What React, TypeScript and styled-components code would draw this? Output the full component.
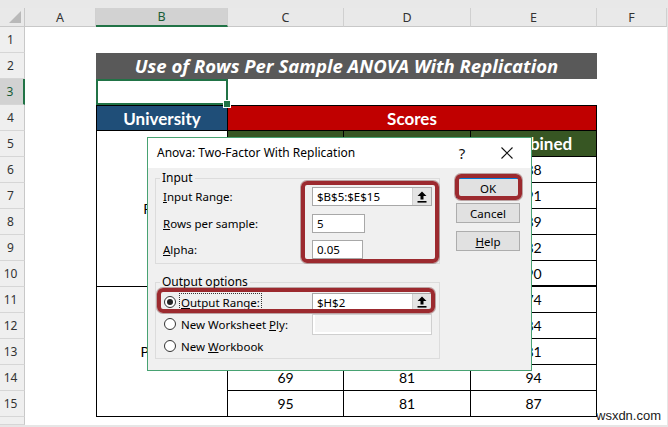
import styled, { createGlobalStyle, css } from 'styled-components';

const GlobalStyle = createGlobalStyle`
  html, body {
    margin: 0;
    padding: 0;
  }
  body {
    width: 668px;
    height: 427px;
    overflow: hidden;
    background: #e6e6e6;
    font-family: "Noto Sans", "Open Sans", sans-serif;
  }
`;

const Screen = styled.div`
  position: relative;
  width: 668px;
  height: 427px;
  display: flex;
  flex-direction: column;
  background: #e6e6e6;
  overflow: hidden;
`;

const TopStrip = styled.div`
  height: 8px;
  flex: none;
  background: #e8e8e8;
`;

const Sheet = styled.div`
  display: grid;
  grid-template-columns: 25px 71px 132px 116px 127px 126px 70px;
  grid-template-rows: 19px repeat(15, 26px) 8px;
  width: 667px;
  background: #fff;
`;

const Corner = styled.div`
  grid-column: 1;
  grid-row: 1;
  position: relative;
  background: #e9e9e9;
  border-right: 1px solid #c8c8c8;
  border-bottom: 1px solid #c8c8c8;
  box-sizing: border-box;
  &::after {
    content: '';
    position: absolute;
    right: 3px;
    bottom: 3px;
    border-style: solid;
    border-width: 0 0 12px 12px;
    border-color: transparent transparent #b9b9b9 transparent;
  }
`;

const ColHeader = styled.div<{ $col: number; $active?: boolean }>`
  grid-column: ${p => p.$col};
  grid-row: 1;
  display: flex;
  align-items: center;
  justify-content: center;
  box-sizing: border-box;
  font-family: "Noto Sans", sans-serif;
  font-size: 12.5px;
  color: ${p => (p.$active ? '#185c37' : '#333')};
  background: ${p => (p.$active ? '#d2d2d2' : '#e9e9e9')};
  border-right: 1px solid #d0d0d0;
  border-bottom: ${p => (p.$active ? '2px solid #217346' : '1px solid #c8c8c8')};
`;

const RowHeader = styled.div<{ $row: number; $active?: boolean }>`
  grid-column: 1;
  grid-row: ${p => p.$row};
  display: flex;
  align-items: center;
  justify-content: center;
  padding-right: 3px;
  box-sizing: border-box;
  font-family: "Noto Sans", sans-serif;
  font-size: 12px;
  color: ${p => (p.$active ? '#185c37' : '#333')};
  background: ${p => (p.$active ? '#d2d2d2' : '#efefef')};
  border-bottom: 1px solid #d6d6d6;
  border-right: ${p => (p.$active ? '2px solid #217346' : '1px solid #c8c8c8')};
`;

type CellProps = {
  $col: number;
  $row: number;
  $colSpan?: number;
  $rowSpan?: number;
  $bg?: string;
  $color?: string;
  $bold?: boolean;
  $size?: number;
  $boxed?: boolean;
  $left?: boolean;
  $top?: boolean;
  $thickBottom?: boolean;
};

const Cell = styled.div<CellProps>`
  grid-column: ${p => p.$col} / span ${p => p.$colSpan ?? 1};
  grid-row: ${p => p.$row} / span ${p => p.$rowSpan ?? 1};
  display: flex;
  align-items: center;
  justify-content: center;
  box-sizing: border-box;
  background: ${p => p.$bg ?? '#fff'};
  color: ${p => p.$color ?? '#000'};
  font-family: Lato, "Open Sans", sans-serif;
  font-size: ${p => p.$size ?? 14}px;
  font-weight: ${p => (p.$bold ? 700 : 400)};
  ${p =>
    p.$boxed &&
    css`
      border-right: 1px solid #000;
      border-bottom: ${p.$thickBottom ? 2 : 1}px solid #000;
      border-left: ${p.$left ? '1px solid #000' : 'none'};
      border-top: ${p.$top ? '1px solid #000' : 'none'};
    `}
`;

const Title = styled.div`
  grid-column: 3 / span 4;
  grid-row: 3;
  display: flex;
  align-items: center;
  justify-content: center;
  padding-bottom: 1px;
  background: #595959;
  color: #fff;
  font-family: "Open Sans", Lato, sans-serif;
  font-size: 18.5px;
  font-weight: 700;
  font-style: italic;
`;

const SelectedCell = styled.div`
  grid-column: 3;
  grid-row: 4;
  position: relative;
  box-sizing: border-box;
  border: 2px solid #217346;
  &::after {
    content: '';
    position: absolute;
    right: -5px;
    bottom: -5px;
    width: 6px;
    height: 6px;
    background: #217346;
    border: 1px solid #fff;
    z-index: 2;
  }
`;

/* ---------- dialog ---------- */

const Dialog = styled.div`
  position: absolute;
  left: 147px;
  top: 137px;
  width: 385px;
  height: 234px;
  box-sizing: border-box;
  border: 1px solid #48a272;
  background: #f0f0f0;
  font-family: "Noto Sans", sans-serif;
  font-size: 11.5px;
  color: #000;
  display: flex;
  flex-direction: column;
`;

const TitleBar = styled.div`
  height: 30px;
  flex: none;
  background: #fff;
  display: flex;
  align-items: center;
  padding-left: 9px;
`;

const TitleText = styled.span`
  font-size: 12px;
  padding-bottom: 1px;
`;

const TitleSpacer = styled.span`
  flex: 1;
`;

const HelpGlyph = styled.span`
  width: 10px;
  font-size: 15px;
  text-align: center;
  margin-right: 34px;
  color: #111;
`;

const CloseGlyph = styled.svg`
  width: 12px;
  height: 12px;
  margin-right: 18px;
`;

const DialogBody = styled.div`
  flex: 1;
  display: flex;
  padding-left: 7px;
`;

const Groups = styled.div`
  display: flex;
  flex-direction: column;
  gap: 18px;
  padding-top: 10px;
`;

const GroupBox = styled.div<{ $height: number; $rows: string; $padTop: number; $padLeft: number }>`
  position: relative;
  width: 285px;
  height: ${p => p.$height}px;
  box-sizing: border-box;
  border: 1px solid #dcdcdc;
  padding: ${p => p.$padTop}px 0 0 ${p => p.$padLeft}px;
  display: grid;
  grid-template-rows: ${p => p.$rows};
  align-items: center;
`;

const GroupTitle = styled.span`
  position: absolute;
  top: -9px;
  left: 4px;
  padding: 0 2px;
  line-height: 16px;
  background: #f0f0f0;
  font-size: 12px;
`;

const FieldRow = styled.div<{ $labelWidth: number }>`
  display: grid;
  grid-template-columns: ${p => p.$labelWidth}px auto;
  align-items: center;
`;

const Label = styled.span`
  font-size: 11.5px;
  white-space: nowrap;
`;

const U = styled.span`
  text-decoration: underline;
  text-underline-offset: 1px;
`;

const TextBox = styled.div<{ $width: number; $height?: number; $disabled?: boolean }>`
  width: ${p => p.$width}px;
  height: ${p => p.$height ?? 19}px;
  box-sizing: border-box;
  border: 1px solid ${p => (p.$disabled ? '#cfcfcf' : '#a8a8a8')};
  background: ${p => (p.$disabled ? '#f4f4f4' : '#fff')};
  box-shadow: ${p => (p.$disabled ? 'inset 2px -2px 0 #fff' : 'none')};
  display: flex;
  align-items: center;
  padding-left: 4px;
  font-size: 11.5px;
`;

const TextValue = styled.span`
  flex: 1;
`;

const RefButton = styled.div`
  width: 19px;
  height: 100%;
  box-sizing: border-box;
  border-left: 1px solid #d0d0d0;
  background: #e4e4e4;
  display: flex;
  align-items: center;
  justify-content: center;
`;

const RadioRow = styled.div`
  display: flex;
  align-items: center;
  gap: 5px;
`;

const Radio = styled.span<{ $checked?: boolean }>`
  width: 12px;
  height: 12px;
  box-sizing: border-box;
  border-radius: 50%;
  border: 1px solid #333;
  background: #fff;
  display: flex;
  align-items: center;
  justify-content: center;
  &::after {
    content: '';
    width: 6px;
    height: 6px;
    border-radius: 50%;
    background: ${p => (p.$checked ? '#222' : 'transparent')};
  }
`;

const FocusLabel = styled.span`
  outline: 1px dotted #333;
  outline-offset: 1px;
  white-space: nowrap;
`;

const ButtonColumn = styled.div`
  display: flex;
  flex-direction: column;
  margin-left: 16px;
  padding-top: 10px;
`;

const Button = styled.div<{ $default?: boolean; $gap?: number }>`
  width: 64px;
  height: 20px;
  box-sizing: border-box;
  margin-top: ${p => p.$gap ?? 0}px;
  border: 1px solid ${p => (p.$default ? '#0078d7' : '#adadad')};
  background: #e1e1e1;
  display: flex;
  align-items: center;
  justify-content: center;
  font-size: 11.5px;
`;

const Highlight = styled.div<{ $x: number; $y: number; $w: number; $h: number }>`
  position: absolute;
  left: ${p => p.$x}px;
  top: ${p => p.$y}px;
  width: ${p => p.$w}px;
  height: ${p => p.$h}px;
  box-sizing: border-box;
  border: 4px solid #9c2a2f;
  border-radius: 6px;
  box-shadow: 0 0 0 1px rgba(90, 20, 20, 0.35);
  pointer-events: none;
`;

const Watermark = styled.span`
  position: absolute;
  left: 596px;
  top: 408px;
  font-family: "Liberation Sans", Arial, sans-serif;
  font-size: 13px;
  color: #1a1a1a;
`;

const ArrowIcon = () => (
  <svg width="10" height="12" viewBox="0 0 10 12">
    <polygon points="5,0.5 9.5,5 6.5,5 6.5,8.5 3.5,8.5 3.5,5 0.5,5" fill="#000" />
    <rect x="0.5" y="10" width="9" height="1.6" fill="#000" />
  </svg>
);

const columns = ['A', 'B', 'C', 'D', 'E', 'F'];

const scores: Array<[number, number, number]> = [
  [78, 85, 88],
  [84, 90, 91],
  [80, 88, 89],
  [75, 82, 82],
  [86, 91, 90],
  [70, 72, 74],
  [79, 83, 84],
  [76, 80, 81],
  [69, 81, 94],
  [95, 81, 87],
];

const App = () => {
  return (
    <Screen>
      <GlobalStyle />
      <TopStrip />
      <Sheet>
        <Corner />
        {columns.map((c, i) => (
          <ColHeader key={c} $col={i + 2} $active={c === 'B'}>
            {c}
          </ColHeader>
        ))}
        {Array.from({ length: 16 }, (_, i) => (
          <RowHeader key={i} $row={i + 2} $active={i + 1 === 3}>
            {i < 15 ? i + 1 : ''}
          </RowHeader>
        ))}

        <Title>Use of Rows Per Sample ANOVA With Replication</Title>
        <SelectedCell />

        <Cell $col={3} $row={5} $bg="#1f4e78" $color="#fff" $bold $size={17} $boxed $left $top>
          University
        </Cell>
        <Cell $col={4} $row={5} $colSpan={3} $bg="#c00000" $color="#fff" $bold $size={17} $boxed $top>
          Scores
        </Cell>
        <Cell $col={3} $row={6} $rowSpan={6} $boxed $left>
          Public
        </Cell>
        <Cell $col={3} $row={12} $rowSpan={5} $boxed $left>
          Private
        </Cell>
        {['Theory', 'Practical', 'Combined'].map((h, i) => (
          <Cell key={h} $col={4 + i} $row={6} $bg="#375623" $color="#fff" $bold $size={17} $boxed>
            {h}
          </Cell>
        ))}
        {scores.map((r, ri) =>
          r.map((v, ci) => (
            <Cell key={`${ri}-${ci}`} $col={4 + ci} $row={7 + ri} $boxed $thickBottom={ri === 4}>
              {v}
            </Cell>
          ))
        )}
      </Sheet>

      <Dialog>
        <TitleBar>
          <TitleText>Anova: Two-Factor With Replication</TitleText>
          <TitleSpacer />
          <HelpGlyph>?</HelpGlyph>
          <CloseGlyph viewBox="0 0 12 12">
            <path d="M0.5 0.5 L11.5 11.5 M11.5 0.5 L0.5 11.5" stroke="#111" strokeWidth="1.1" />
          </CloseGlyph>
        </TitleBar>
        <DialogBody>
          <Groups>
            <GroupBox $height={86} $rows="27px 27px 25px" $padTop={4} $padLeft={7}>
              <GroupTitle>Input</GroupTitle>
              <FieldRow $labelWidth={149}>
                <Label>
                  <U>I</U>nput Range:
                </Label>
                <TextBox $width={120}>
                  <TextValue>$B$5:$E$15</TextValue>
                  <RefButton>
                    <ArrowIcon />
                  </RefButton>
                </TextBox>
              </FieldRow>
              <FieldRow $labelWidth={149}>
                <Label>
                  <U>R</U>ows per sample:
                </Label>
                <TextBox $width={53}>5</TextBox>
              </FieldRow>
              <FieldRow $labelWidth={149}>
                <Label>
                  <U>A</U>lpha:
                </Label>
                <TextBox $width={51}>0.05</TextBox>
              </FieldRow>
            </GroupBox>

            <GroupBox $height={77} $rows="22px 22px 22px" $padTop={8} $padLeft={8}>
              <GroupTitle>Output options</GroupTitle>
              <FieldRow $labelWidth={148}>
                <RadioRow>
                  <Radio $checked />
                  <FocusLabel>
                    <U>O</U>utput Range:
                  </FocusLabel>
                </RadioRow>
                <TextBox $width={120} $height={18}>
                  <TextValue>$H$2</TextValue>
                  <RefButton>
                    <ArrowIcon />
                  </RefButton>
                </TextBox>
              </FieldRow>
              <FieldRow $labelWidth={148}>
                <RadioRow>
                  <Radio />
                  <Label>
                    New Worksheet <U>P</U>ly:
                  </Label>
                </RadioRow>
                <TextBox $width={120} $height={21} $disabled />
              </FieldRow>
              <FieldRow $labelWidth={148}>
                <RadioRow>
                  <Radio />
                  <Label>
                    New <U>W</U>orkbook
                  </Label>
                </RadioRow>
              </FieldRow>
            </GroupBox>
          </Groups>

          <ButtonColumn>
            <Button $default>OK</Button>
            <Button $gap={5}>Cancel</Button>
            <Button $gap={8}>
              <span>
                <U>H</U>elp
              </span>
            </Button>
          </ButtonColumn>
        </DialogBody>
      </Dialog>

      <Highlight $x={301} $y={181} $w={138} $h={82} />
      <Highlight $x={455} $y={174} $w={67} $h={26} />
      <Highlight $x={157} $y={288} $w={278} $h={25} />

      <Watermark>wsxdn.com</Watermark>
    </Screen>
  );
};

export default App;
